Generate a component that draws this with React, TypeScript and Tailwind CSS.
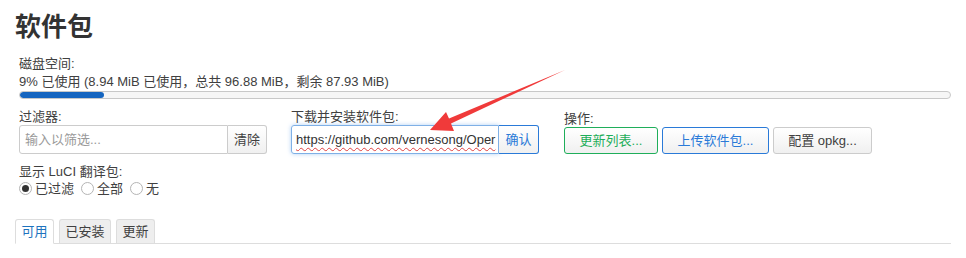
import React from 'react';

const font = '[font-family:"Liberation_Sans","Noto_Sans_CJK_SC",Arial,sans-serif]';

function Arrow() {
  return (
    <svg className="pointer-events-none absolute left-0 top-0" width="966" height="258">
      <polygon
        points="565,70 451,123.5 454,131 430,130 446,112 449,118.5"
        fill="#f03a3a"
      />
    </svg>
  );
}

function Radio({ label, checked }: { label: string; checked?: boolean }) {
  return (
    <label className="flex items-center gap-[3px]">
      <span className="flex h-[13px] w-[13px] items-center justify-center rounded-full border border-[#b5b5b5] bg-white">
        {checked && <span className="h-[7px] w-[7px] rounded-full bg-[#333]" />}
      </span>
      <span>{label}</span>
    </label>
  );
}

export default function App() {
  return (
    <div className={`relative h-[258px] w-[966px] overflow-hidden bg-white text-[13px] leading-[14px] text-[#404040] ${font}`}>
      <div className="px-[15px] pt-[12px]">
        <h2 className="text-[26px] font-bold leading-[30px] text-[#333]">软件包</h2>

        <div className="mt-[14px] pl-[4px] pr-[15px]">
          <div className="leading-[15px]">磁盘空间:</div>
          <div className="mt-[3px] leading-[15px]">9% 已使用 (8.94 MiB 已使用，总共 96.88 MiB，剩余 87.93 MiB)</div>
          <div className="mt-[2px] h-[8px] w-[932px] overflow-hidden rounded-[4px] border border-[#c8c8c8] bg-[#f6f6f6]">
            <div className="h-full w-[84px] rounded-[3px] bg-[#1565c0]" />
          </div>
        </div>

        <div className="mt-[10px] flex pl-[4px]">
          <div className="w-[272px]">
            <div className="leading-[15px]">过滤器:</div>
            <div className="mt-[1px] flex h-[29px] w-[248px]">
              <div className="flex flex-1 items-center rounded-l-[3px] border border-[#ccc] px-[5px] text-[#999]">输入以筛选...</div>
              <div className="flex w-[39px] items-center justify-center rounded-r-[3px] border border-l-0 border-[#ccc] bg-gradient-to-b from-white to-[#f0f0f0]">清除</div>
            </div>
            <div className="mt-[10px] leading-[15px]">显示 LuCI 翻译包:</div>
            <div className="mt-[2px] flex gap-[7px] leading-[15px]">
              <Radio label="已过滤" checked />
              <Radio label="全部" />
              <Radio label="无" />
            </div>
          </div>

          <div className="w-[273px]">
            <div className="leading-[15px]">下载并安装软件包:</div>
            <div className="mt-[1px] flex h-[29px] w-[248px]">
              <div className="flex min-w-0 flex-1 items-center overflow-hidden whitespace-nowrap rounded-l-[3px] border border-[#7fb0e6] pl-[4px] text-[#333] shadow-[0_0_4px_rgba(80,150,230,0.45)]">
                <span className="underline decoration-[#e04040] decoration-wavy decoration-1 underline-offset-[3px]">https://github.com/vernesong/Oper</span>
              </div>
              <div className="flex w-[40px] items-center justify-center rounded-r-[3px] border border-l-0 border-[#2a7ad8] bg-gradient-to-b from-white to-[#f0f0f0] text-[#2a7ad8]">确认</div>
            </div>
          </div>

          <div className="pt-[2px]">
            <div className="leading-[15px]">操作:</div>
            <div className="mt-[1px] flex h-[27px] gap-[4px]">
              <div className="flex w-[94px] items-center justify-center rounded-[3px] border border-[#1fae5a] bg-gradient-to-b from-white to-[#f0f0f0] text-[#1fae5a]">更新列表...</div>
              <div className="flex w-[107px] items-center justify-center rounded-[3px] border border-[#2a7ad8] bg-gradient-to-b from-white to-[#f0f0f0] text-[#2a7ad8]">上传软件包...</div>
              <div className="flex w-[99px] items-center justify-center rounded-[3px] border border-[#ccc] bg-gradient-to-b from-white to-[#f0f0f0]">配置 opkg...</div>
            </div>
          </div>
        </div>

        <div className="mt-[23px] flex items-end gap-[5px] border-b border-[#ddd]">
          <div className="-mb-px flex h-[25px] w-[39px] items-center justify-center rounded-t-[3px] border border-b-white border-[#ddd] bg-white text-[#1e73be]">可用</div>
          <div className="flex h-[24px] w-[52px] items-center justify-center rounded-t-[3px] border border-b-0 border-[#ddd] bg-[#eee]">已安装</div>
          <div className="flex h-[24px] w-[39px] items-center justify-center rounded-t-[3px] border border-b-0 border-[#ddd] bg-[#eee]">更新</div>
        </div>
      </div>
      <Arrow />
    </div>
  );
}
